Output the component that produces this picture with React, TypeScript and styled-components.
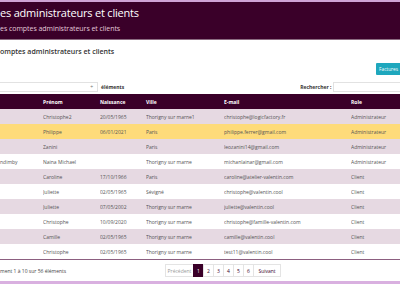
import React from "react";
import styled, { createGlobalStyle } from "styled-components";

const Global = createGlobalStyle`
  html, body { margin: 0; padding: 0; background: #ffffff; }
  body { width: 400px; height: 284px; overflow: hidden; font-family: "Open Sans", "Liberation Sans", sans-serif; }
`;

const Page = styled.div`
  width: 400px;
  height: 284px;
  display: flex;
  flex-direction: column;
  border-top: 2px solid #cfa3d6;
  border-bottom: 3px solid #d9b0e0;
  box-sizing: border-box;
  overflow: hidden;
`;

const Header = styled.header`
  background: #3a0029;
  height: 38px;
  padding-top: 4px;
  box-sizing: border-box;
  border-bottom: 1px solid #8a6b80;
`;

const Title = styled.h1`
  margin: 0;
  font-size: 11px;
  letter-spacing: -0.2px;
  line-height: 14px;
  font-weight: 400;
  color: #ffffff;
  white-space: nowrap;
`;

const Subtitle = styled.p`
  margin: 4px 0 0;
  font-size: 7px;
  line-height: 9px;
  letter-spacing: -0.05px;
  color: #e3c9da;
  white-space: nowrap;
`;

const Panel = styled.main`
  flex: 1;
  display: flex;
  flex-direction: column;
  background: #ffffff;
  padding-top: 7px;
`;

const PanelTitle = styled.h2`
  margin: 0;
  font-size: 7px;
  line-height: 9px;
  font-weight: 600;
  color: #333;
  white-space: nowrap;
`;

const Actions = styled.div`
  display: flex;
  justify-content: flex-end;
  margin-top: 7px;
`;

const TealButton = styled.button`
  height: 12px;
  width: 24px;
  padding: 0 0 0 3px;
  border: none;
  border-radius: 1px 0 0 1px;
  background: #1ea7bd;
  color: #ffffff;
  font-family: inherit;
  font-size: 4.8px;
  text-align: left;
  white-space: nowrap;
`;

const Controls = styled.div`
  display: flex;
  align-items: center;
  height: 10px;
  margin-top: 7px;
`;

const Select = styled.div`
  width: 98px;
  height: 10px;
  box-sizing: border-box;
  border: 1px solid #e2e2e2;
  border-left: none;
  display: flex;
  align-items: center;
  justify-content: flex-end;
  padding-right: 4px;
  font-size: 5px;
  color: #555;
`;

const Label = styled.span<{ $ml?: number }>`
  font-size: 5px;
  font-weight: 700;
  color: #333;
  margin-left: ${(p) => p.$ml ?? 0}px;
  white-space: nowrap;
`;

const Search = styled.div`
  margin-left: 2px;
  flex: 1;
  height: 10px;
  box-sizing: border-box;
  border: 1px solid #e2e2e2;
  border-right: none;
`;

const Table = styled.table`
  margin-top: 2px;
  width: 400px;
  border-collapse: collapse;
  table-layout: fixed;
  border-bottom: 1px solid #8c5f80;
`;

const Th = styled.th`
  background: #3a0029;
  color: #ffffff;
  font-size: 5px;
  font-weight: 700;
  text-align: left;
  height: 15px;
  padding: 0;
  white-space: nowrap;
`;

const Tr = styled.tr<{ $bg: string }>`
  background: ${(p) => p.$bg};
`;

const Td = styled.td`
  font-size: 5px;
  color: #555;
  height: 15px;
  padding: 0;
  white-space: nowrap;
  overflow: hidden;
`;

const Footer = styled.div`
  flex: 1;
  display: grid;
  grid-template-columns: 166px auto;
  align-items: center;
`;

const Info = styled.span`
  font-size: 5px;
  color: #444;
  white-space: nowrap;
`;

const Pager = styled.nav`
  display: flex;
  height: 13px;
`;

const PageItem = styled.span<{ $active?: boolean; $w: number; $muted?: boolean }>`
  width: ${(p) => p.$w}px;
  height: 13px;
  box-sizing: border-box;
  display: flex;
  align-items: center;
  justify-content: center;
  font-size: 5px;
  border: 1px solid ${(p) => (p.$active ? "#3a0029" : "#e4e4e4")};
  margin-left: -1px;
  background: ${(p) => (p.$active ? "#3a0029" : "#fff")};
  color: ${(p) => (p.$active ? "#fff" : p.$muted ? "#999" : "#3a0029")};
`;

const cols = [43, 57, 46, 78, 127, 49];

const rows: [string, string, string, string, string, string][] = [
  ["", "Christophe2", "20/05/1965", "Thorigny sur marne1", "christophe@logicfactory.fr", "Administrateur"],
  ["", "Philippe", "06/01/2021", "Paris", "philippe.ferrer@gmail.com", "Administrateur"],
  ["", "Zanini", "", "Paris", "leozanini14@gmail.com", "Administrateur"],
  ["ndimby", "Naina Michael", "", "Thorigny sur marne", "michanlainar@gmail.com", "Administrateur"],
  ["", "Caroline", "17/10/1966", "Paris", "caroline@atelier-valentin.com", "Client"],
  ["", "Juliette", "02/05/1965", "Sévigné", "christophe@valentin.cool", "Client"],
  ["", "Juliette", "07/05/2002", "Thorigny sur marne", "juliette@valentin.cool", "Client"],
  ["", "Christophe", "10/09/2020", "Thorigny sur marne", "christophe@famille-valentin.com", "Client"],
  ["", "Camille", "02/05/1965", "Thorigny sur marne", "camille@valentin.cool", "Client"],
  ["", "Christophe", "02/05/1965", "Thorigny sur marne", "test11@valentin.cool", "Client"],
];

const rowBg = (i: number) => (i === 1 ? "#fedb7a" : i % 2 === 0 ? "#e6d9e2" : "#ffffff");

export default function App() {
  return (
    <>
      <Global />
      <Page>
        <Header>
          <Title>es administrateurs et clients</Title>
          <Subtitle>es comptes administrateurs et clients</Subtitle>
        </Header>
        <Panel>
          <PanelTitle>omptes administrateurs et clients</PanelTitle>
          <Actions>
            <TealButton>Factures</TealButton>
          </Actions>
          <Controls>
            <Select>÷</Select>
            <Label $ml={3}>éléments</Label>
            <Label $ml={176}>Rechercher :</Label>
            <Search />
          </Controls>
          <Table>
            <colgroup>
              {cols.map((w, i) => (
                <col key={i} style={{ width: w }} />
              ))}
            </colgroup>
            <thead>
              <tr>
                <Th></Th>
                <Th>Prénom</Th>
                <Th>Naissance</Th>
                <Th>Ville</Th>
                <Th>E-mail</Th>
                <Th>Role</Th>
              </tr>
            </thead>
            <tbody>
              {rows.map((r, i) => (
                <Tr key={i} $bg={rowBg(i)}>
                  {r.map((c, j) => (
                    <Td key={j}>{c}</Td>
                  ))}
                </Tr>
              ))}
            </tbody>
          </Table>
          <Footer>
            <Info>ment 1 à 10 sur 56 éléments</Info>
            <Pager>
              <PageItem $w={29} $muted>Précédent</PageItem>
              <PageItem $w={11} $active>1</PageItem>
              <PageItem $w={11}>2</PageItem>
              <PageItem $w={11}>3</PageItem>
              <PageItem $w={11}>4</PageItem>
              <PageItem $w={11}>5</PageItem>
              <PageItem $w={11}>6</PageItem>
              <PageItem $w={28}>Suivant</PageItem>
            </Pager>
          </Footer>
        </Panel>
      </Page>
    </>
  );
}
